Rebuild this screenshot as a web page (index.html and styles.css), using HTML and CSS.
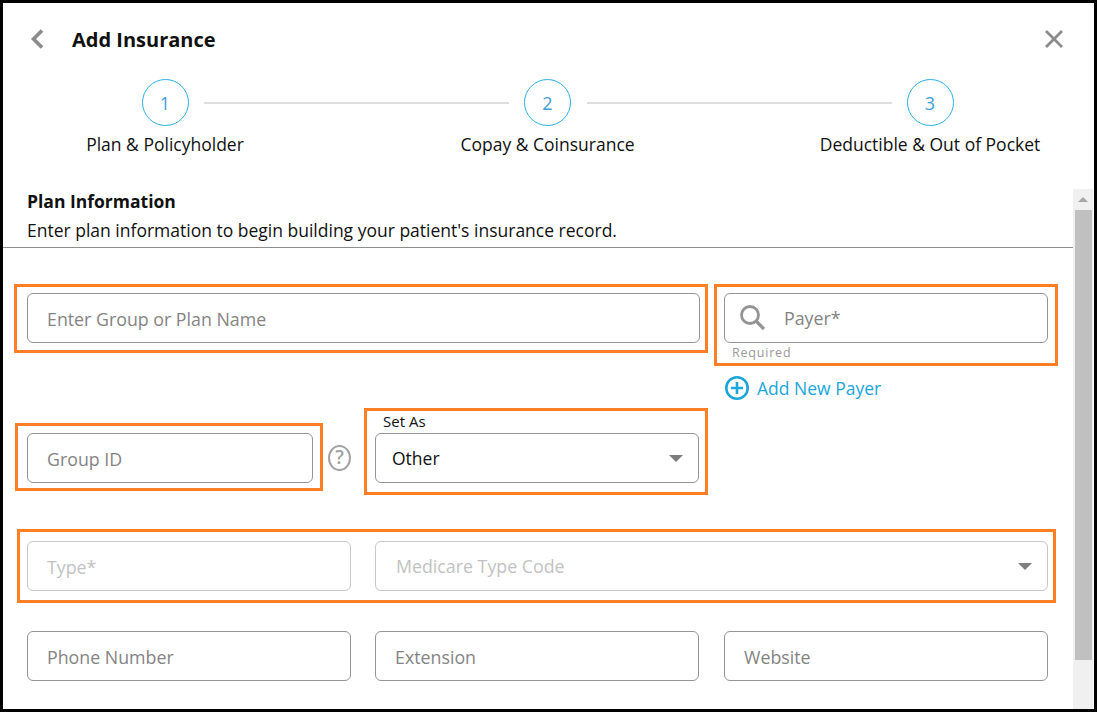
FILE: index.html
```html
<!DOCTYPE html>
<html lang="en">

<head>
    <meta charset="UTF-8">
    <meta name="viewport" content="width=device-width, initial-scale=1.0">
    <title>Add Insurance</title>
    <link rel="stylesheet" href="styles.css">
</head>

<body>
    <div class="dialog">
        <div class="head">
            <svg class="back" width="16" height="22" viewBox="0 0 16 22">
                <path d="M13 2.5 L4.5 11 L13 19.5" fill="none" stroke="#8c8c8c" stroke-width="3.6" />
            </svg>
            <h1 class="title">Add Insurance</h1>
            <svg class="close" width="20" height="20" viewBox="0 0 20 20">
                <path d="M2 2 L18 18 M18 2 L2 18" fill="none" stroke="#8c8c8c" stroke-width="2.8" />
            </svg>
        </div>

        <div class="steps">
            <div class="step">
                <div class="circle">1</div>
                <div class="step-name">Plan &amp; Policyholder</div>
            </div>
            <div class="line"></div>
            <div class="step">
                <div class="circle">2</div>
                <div class="step-name">Copay &amp; Coinsurance</div>
            </div>
            <div class="line"></div>
            <div class="step">
                <div class="circle">3</div>
                <div class="step-name">Deductible &amp; Out of Pocket</div>
            </div>
        </div>

        <div class="content">
            <div class="main">
                <div class="intro">
                    <h2 class="intro-title">Plan Information</h2>
                    <p class="intro-text">Enter plan information to begin building your patient's insurance record.</p>
                </div>

                <div class="form">
                    <div class="field span2"><span class="hint">Enter Group or Plan Name</span></div>
                    <div class="payer-col">
                        <div class="field">
                            <svg class="search" width="30" height="30" viewBox="0 0 30 30">
                                <circle cx="12" cy="12" r="8.5" fill="none" stroke="#949494" stroke-width="2.8" />
                                <path d="M18 18 L26 26" stroke="#949494" stroke-width="3.2" />
                            </svg>
                            <span class="hint payer-hint">Payer*</span>
                        </div>
                        <div class="required">Required</div>
                        <a class="add-payer">
                            <svg width="26" height="26" viewBox="0 0 26 26">
                                <circle cx="13" cy="13" r="10.7" fill="none" stroke="#1ba6dc" stroke-width="2.6" />
                                <path d="M13 7 V19 M7 13 H19" stroke="#1ba6dc" stroke-width="2.6" />
                            </svg>
                            Add New Payer
                        </a>
                    </div>

                    <div class="group-row">
                        <div class="field group-id"><span class="hint">Group ID</span></div>
                        <div class="help">?</div>
                    </div>
                    <div class="set-as col2">
                        <div class="float-label">Set As</div>
                        <div class="field select">
                            <span>Other</span>
                            <div class="caret"></div>
                        </div>
                    </div>
                    <div></div>

                    <div class="field off"><span class="hint">Type*</span></div>
                    <div class="field select off span2">
                        <span class="hint">Medicare Type Code</span>
                        <div class="caret"></div>
                    </div>

                    <div class="field"><span class="hint">Phone Number</span></div>
                    <div class="field col2"><span class="hint">Extension</span></div>
                    <div class="field"><span class="hint">Website</span></div>
                </div>

                <!-- orange call-outs drawn on top of the form -->
                <div class="mark mark-name"></div>
                <div class="mark mark-payer"></div>
                <div class="mark mark-group"></div>
                <div class="mark mark-set"></div>
                <div class="mark mark-type"></div>
            </div>

            <div class="scrollbar">
                <div class="arrow"></div>
                <div class="thumb"></div>
            </div>
        </div>
    </div>
</body>

</html>
```

FILE: styles.css
```css
* {
    margin: 0;
    padding: 0;
    box-sizing: border-box;
}

body {
    font-family: "Open Sans", "Liberation Sans", sans-serif;
    color: #111;
    background-color: #fff;
}

.dialog {
    position: relative;
    width: 1097px;
    height: 712px;
    border: 3px solid #000;
    overflow: hidden;
    display: flex;
    flex-direction: column;
}

.head {
    display: flex;
    align-items: center;
    height: 72px;
    padding: 0 30px 0 26px;
}

.back {
    margin-right: 27px;
}

.title {
    font-size: 20px;
    font-weight: 700;
    flex: 1;
}

.steps {
    display: flex;
    height: 114px;
    padding: 4px 0 0 122px;
}

.step {
    width: 80px;
    flex: none;
    display: flex;
    flex-direction: column;
    align-items: center;
}

.circle {
    width: 47px;
    height: 47px;
    border: 1.5px solid #29b1e3;
    border-radius: 50%;
    color: #3c9fd8;
    font-size: 18px;
    display: flex;
    align-items: center;
    justify-content: center;
}

.step-name {
    font-size: 17.5px;
    line-height: 24px;
    margin-top: 6px;
    white-space: nowrap;
}

.line {
    width: 305px;
    height: 2px;
    margin: 23px -1.5px 0 -1px;
    background-color: #dedede;
}

.content {
    flex: 1;
    display: flex;
    min-height: 0;
}

.main {
    position: relative;
    width: 1070px;
    overflow: hidden;
}

.intro {
    height: 59px;
    padding-left: 24px;
    border-bottom: 1px solid #8e8e8e;
}

.intro-title {
    font-size: 17.5px;
    font-weight: 700;
    line-height: 24px;
}

.intro-text {
    font-size: 17.5px;
    line-height: 34px;
}

.form {
    display: grid;
    grid-template-columns: 324px 325px 324px;
    grid-template-rows: 140px 108px 90px 50px;
    column-gap: 24px;
    padding: 45px 0 0 24px;
}

.span2 {
    grid-column: span 2;
}

.col2 {
    width: 324px;
}

.field {
    display: flex;
    align-items: center;
    height: 50px;
    padding: 0 19px;
    border: 1px solid #949494;
    border-radius: 6px;
    font-size: 17.5px;
}

.hint {
    font-size: 17.8px;
    margin-top: 1px;
    color: #848484;
}

.off {
    border-color: #c8c8c8;
}

.off .hint {
    color: #c2c2c2;
}

.select {
    justify-content: space-between;
    padding: 0 15px 0 16px;
}

.select.off {
    padding-left: 20px;
}

.select .hint {
    margin-top: 0;
}

.caret {
    width: 0;
    height: 0;
    border-left: 7px solid transparent;
    border-right: 7px solid transparent;
    border-top: 7px solid #7d7d7d;
}

.search {
    margin-left: -6px;
    flex: none;
}

.payer-hint {
    margin: 0 0 0 16px;
}

.required {
    font-size: 12.5px;
    line-height: 20px;
    letter-spacing: 0.8px;
    color: #999;
    padding-left: 8px;
}

.add-payer {
    display: flex;
    align-items: center;
    gap: 7px;
    margin-top: 12px;
    font-size: 17.5px;
    line-height: 26px;
    color: #1ba6dc;
}

.group-row {
    display: flex;
    align-items: flex-start;
}

.group-id {
    width: 286px;
    flex: none;
}

.help {
    width: 26px;
    height: 26px;
    margin: 12px 0 0 15px;
    border: 2.5px solid #a3a3a3;
    border-radius: 50%;
    color: #a3a3a3;
    font-size: 19px;
    font-weight: 600;
    line-height: 21px;
    text-align: center;
}

.set-as {
    position: relative;
}

.float-label {
    position: absolute;
    left: 8px;
    top: -22px;
    font-size: 15px;
    line-height: 20px;
}

.mark {
    position: absolute;
    border: 3px solid #ff7f27;
}

.mark-name {
    left: 11px;
    top: 95px;
    width: 694px;
    height: 69px;
}

.mark-payer {
    left: 711px;
    top: 95px;
    width: 344px;
    height: 82px;
}

.mark-group {
    left: 12px;
    top: 234px;
    width: 308px;
    height: 68px;
}

.mark-set {
    left: 361px;
    top: 219px;
    width: 344px;
    height: 87px;
}

.mark-type {
    left: 14px;
    top: 340px;
    width: 1039px;
    height: 74px;
}

.scrollbar {
    width: 20px;
    background-color: #f0f0f0;
    padding-left: 2px;
}

.arrow {
    width: 0;
    height: 0;
    margin: 8px 0 0 3px;
    border-left: 5px solid transparent;
    border-right: 5px solid transparent;
    border-bottom: 5px solid #a6a6a6;
}

.thumb {
    width: 17px;
    height: 450px;
    margin-top: 8px;
    background-color: #c0c0c0;
}
```
